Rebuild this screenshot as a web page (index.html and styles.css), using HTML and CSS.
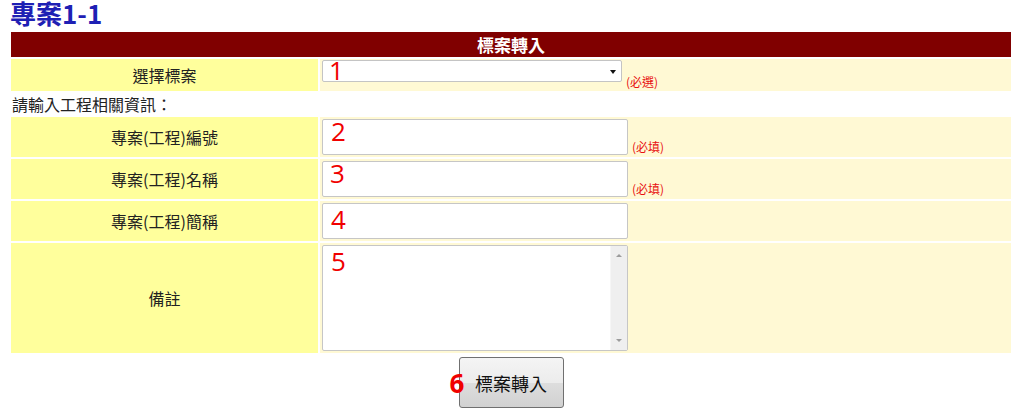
FILE: index.html
```html
<!DOCTYPE html>
<html lang="zh-Hant">
<head>
<meta charset="utf-8">
<title>專案1-1</title>
<link rel="stylesheet" href="styles.css">
</head>
<body>
<h1 class="title">專案1-1</h1>
<div class="form">
  <div class="bar">標案轉入</div>
  <div class="row row-select">
    <div class="label">選擇標案</div>
    <div class="field field-select">
      <div class="control select-wrap">
        <select class="select"><option></option></select>
        <span class="caret"></span>
        <span class="mark mark-1">1</span>
      </div>
      <span class="note note-select">(必選)</span>
    </div>
  </div>
  <div class="hint">請輸入工程相關資訊：</div>
  <div class="row row-input">
    <div class="label">專案(工程)編號</div>
    <div class="field">
      <div class="control">
        <input class="input" type="text">
        <span class="mark mark-2">2</span>
      </div>
      <span class="note">(必填)</span>
    </div>
  </div>
  <div class="row row-input">
    <div class="label">專案(工程)名稱</div>
    <div class="field">
      <div class="control">
        <input class="input" type="text">
        <span class="mark mark-3">3</span>
      </div>
      <span class="note">(必填)</span>
    </div>
  </div>
  <div class="row row-input">
    <div class="label">專案(工程)簡稱</div>
    <div class="field">
      <div class="control">
        <input class="input" type="text">
        <span class="mark mark-4">4</span>
      </div>
    </div>
  </div>
  <div class="row row-area">
    <div class="label">備註</div>
    <div class="field">
      <div class="control">
        <textarea class="area"></textarea>
        <div class="scrollbar">
          <span class="arrow arrow-up"></span>
          <span class="arrow arrow-down"></span>
        </div>
        <span class="mark mark-5">5</span>
      </div>
    </div>
  </div>
  <div class="actions">
    <div class="control">
      <button class="btn" type="button">標案轉入</button>
      <span class="mark mark-6">6</span>
    </div>
  </div>
</div>
</body>
</html>
```

FILE: styles.css
```css
html, body {
  margin: 0;
  padding: 0;
  background: #ffffff;
}
body {
  font-family: "Noto Sans CJK TC", "Noto Sans", sans-serif;
  color: #222222;
}
.title {
  margin: 0 0 0 10px;
  height: 32px;
  line-height: 26px;
  font-size: 26px;
  font-weight: 700;
  color: #1e20b4;
}
.form {
  margin-left: 11px;
  width: 1000px;
  display: flex;
  flex-direction: column;
  gap: 2px;
}
.bar {
  height: 25px;
  line-height: 25px;
  background: #800000;
  color: #ffffff;
  font-size: 17px;
  font-weight: 700;
  text-align: center;
}
.row {
  display: flex;
  gap: 2px;
}
.row-select { height: 32px; }
.row-input { height: 40px; }
.row-area { height: 110px; }
.label {
  width: 307px;
  flex: none;
  background: #ffff9c;
  display: flex;
  align-items: center;
  justify-content: center;
  font-size: 16px;
  line-height: 20px;
}
.field {
  flex: 1;
  background: #fff9d4;
  display: flex;
  align-items: flex-start;
  padding: 2px 0 0 2px;
}
.field-select {
  padding-top: 1px;
}
.control {
  position: relative;
}
.select {
  display: block;
  width: 300px;
  height: 22px;
  margin: 0;
  border: 1px solid #c4c4c4;
  border-radius: 2px;
  background: #ffffff;
  -webkit-appearance: none;
  appearance: none;
}
.caret {
  position: absolute;
  right: 6px;
  top: 10px;
  width: 0;
  height: 0;
  border-left: 3px solid transparent;
  border-right: 3px solid transparent;
  border-top: 4px solid #111111;
}
.input {
  display: block;
  box-sizing: border-box;
  width: 306px;
  height: 36px;
  margin: 0;
  border: 1px solid #c6c6c6;
  border-radius: 2px;
  background: #ffffff;
}
.area {
  display: block;
  box-sizing: border-box;
  width: 306px;
  height: 106px;
  margin: 0;
  border: 1px solid #c6c6c6;
  border-radius: 2px;
  background: #ffffff;
  resize: none;
  overflow: hidden;
}
.scrollbar {
  position: absolute;
  top: 1px;
  right: 1px;
  bottom: 1px;
  width: 16px;
  background: #efefef;
  border-left: 1px solid #f6f6f6;
}
.arrow {
  position: absolute;
  left: 5px;
  width: 0;
  height: 0;
  border-left: 3px solid transparent;
  border-right: 3px solid transparent;
}
.arrow-up {
  top: 8px;
  border-bottom: 3px solid #9c9c9c;
}
.arrow-down {
  bottom: 8px;
  border-top: 3px solid #9c9c9c;
}
.note {
  margin-left: 4px;
  margin-top: 21px;
  font-size: 12px;
  line-height: 14px;
  color: #e81010;
}
.note-select {
  margin-top: 15px;
}
.hint {
  height: 22px;
  line-height: 22px;
  font-size: 16px;
  padding-left: 1px;
}
.mark {
  position: absolute;
  font-family: "Open Sans", "DejaVu Sans", sans-serif;
  font-size: 26px;
  line-height: 26px;
  color: #f00000;
  pointer-events: none;
}
.mark-1 { left: 7px; top: -3px; }
.mark-2 { left: 9px; top: -1px; }
.mark-3 { left: 8px; top: -1px; }
.mark-4 { left: 9px; top: 3px; }
.mark-5 { left: 9px; top: 3px; }
.mark-6 { left: -9px; top: 13px; font-weight: 700; }
.actions {
  display: flex;
  justify-content: center;
  margin-top: 2px;
}
.btn {
  display: block;
  width: 105px;
  height: 51px;
  margin: 0;
  padding: 0;
  border: 1px solid #707070;
  border-radius: 3px;
  background: linear-gradient(to bottom, #f4f4f4 0%, #ececec 50%, #dddddd 51%, #d1d1d1 100%);
  font-family: "Noto Sans CJK TC", "Noto Sans", sans-serif;
  font-size: 18px;
  color: #111111;
}
```
